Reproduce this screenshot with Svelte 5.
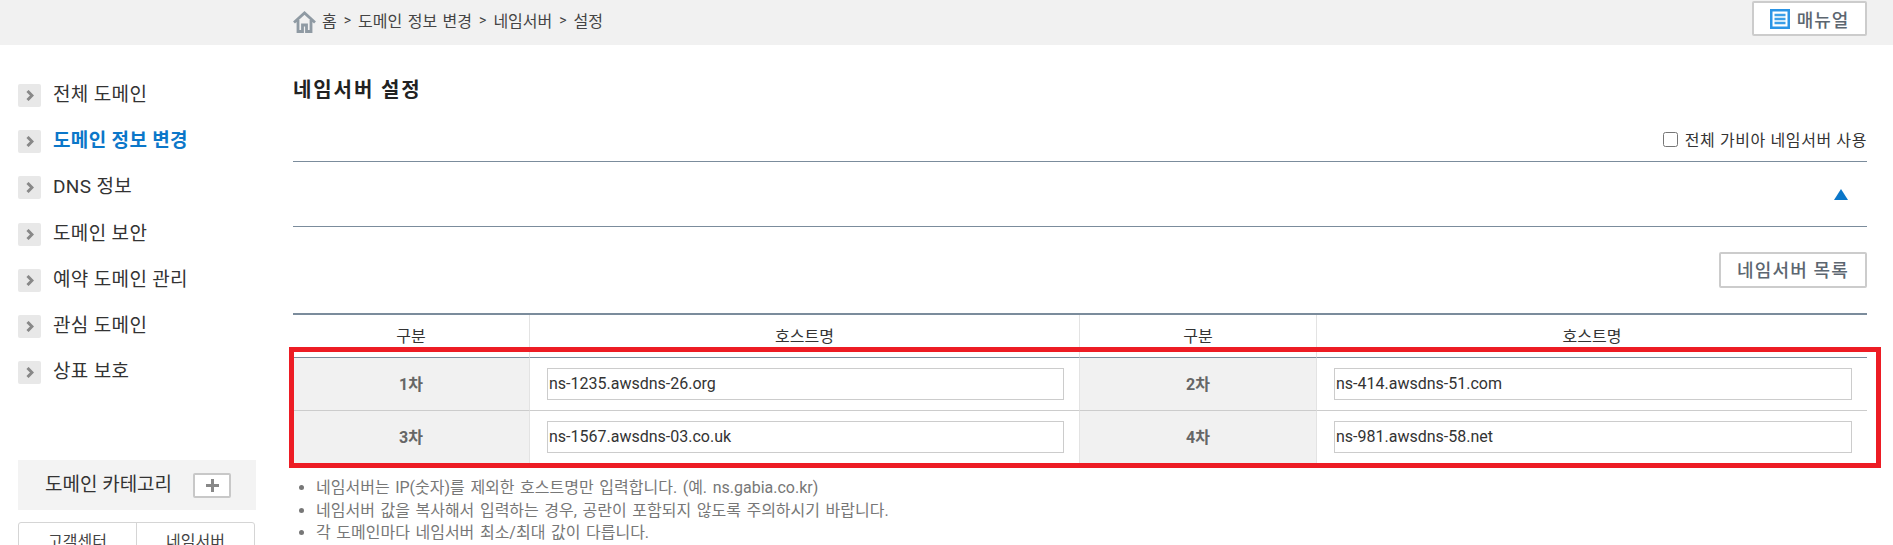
<script>
  const crumbs = ["도메인 정보 변경", "네임서버", "설정"];
  const navItems = [
    { label: "전체 도메인" },
    { label: "도메인 정보 변경", active: true },
    { label: "DNS 정보" },
    { label: "도메인 보안" },
    { label: "예약 도메인 관리" },
    { label: "관심 도메인" },
    { label: "상표 보호" }
  ];
  const rows = [
    [
      { name: "1차", host: "ns-1235.awsdns-26.org" },
      { name: "2차", host: "ns-414.awsdns-51.com" }
    ],
    [
      { name: "3차", host: "ns-1567.awsdns-03.co.uk" },
      { name: "4차", host: "ns-981.awsdns-58.net" }
    ]
  ];
  const notes = [
    "네임서버는 IP(숫자)를 제외한 호스트명만 입력합니다. (예. ns.gabia.co.kr)",
    "네임서버 값을 복사해서 입력하는 경우, 공란이 포함되지 않도록 주의하시기 바랍니다.",
    "각 도메인마다 네임서버 최소/최대 값이 다릅니다."
  ];
</script>

<div class="page">
  <header class="topbar">
    <div class="crumbs">
      <svg class="home" width="23" height="22" viewBox="0 0 23 22" aria-hidden="true">
        <path d="M1 11.500 11.500 2 22 11.500M5 9v11.500h4.500v-6.500h4v6.500H18V9" fill="none" stroke="#8f9aa3" stroke-width="2.800" />
      </svg>
      <span>홈</span>
      {#each crumbs as c}
        <span class="sep">&gt;</span>
        <span>{c}</span>
      {/each}
    </div>
    <button class="manual">
      <svg width="20" height="20" viewBox="0 0 20 20" aria-hidden="true">
        <rect width="20" height="20" fill="#2b95e6" />
        <rect x="2.500" y="2.500" width="15" height="15" fill="#fff" />
        <path d="M4.500 6h11M4.500 10h11M4.500 14h11" stroke="#3b9fe8" stroke-width="2.500" />
      </svg>
      <span>매뉴얼</span>
    </button>
  </header>

  <div class="body">
    <aside class="side">
      <ul class="nav">
        {#each navItems as item}
          <li class:active={item.active}>
            <span class="arrow">
              <svg width="8" height="11" viewBox="0 0 8 11" aria-hidden="true">
                <path d="M1.500 1 6 5.500 1.500 10" fill="none" stroke="#888" stroke-width="3" />
              </svg>
            </span>
            <span class="label">{item.label}</span>
          </li>
        {/each}
      </ul>
      <div class="category">
        <span class="label">도메인 카테고리</span>
        <button class="plus" aria-label="추가">
          <svg width="13" height="13" viewBox="0 0 13 13" aria-hidden="true">
            <path d="M6.500 0v13M0 6.500h13" stroke="#888" stroke-width="3" />
          </svg>
        </button>
      </div>
      <div class="support">
        <div>고객센터</div>
        <div>네임서버</div>
      </div>
    </aside>

    <main class="main">
      <h1>네임서버 설정</h1>
      <label class="use-all">
        <input type="checkbox" />
        <span>전체 가비아 네임서버 사용</span>
      </label>
      <div class="fold">
        <span class="triangle"></span>
      </div>
      <div class="actions">
        <button class="list-btn">네임서버 목록</button>
      </div>

      <div class="table-wrap">
        <table>
          <colgroup>
            <col class="c1" />
            <col class="c2" />
            <col class="c3" />
            <col />
          </colgroup>
          <thead>
            <tr>
              <th>구분</th>
              <th>호스트명</th>
              <th>구분</th>
              <th>호스트명</th>
            </tr>
          </thead>
          <tbody>
            {#each rows as row}
              <tr>
                {#each row as ns}
                  <th class="name">{ns.name}</th>
                  <td><input type="text" value={ns.host} /></td>
                {/each}
              </tr>
            {/each}
          </tbody>
        </table>
        <div class="highlight"></div>
      </div>

      <ul class="notes">
        {#each notes as note}
          <li>{note}</li>
        {/each}
      </ul>
    </main>
  </div>
</div>

<style>
  :global(body) {
    margin: 0;
    background: #fff;
  }

  .page {
    height: 545px;
    overflow: hidden;
    font-family: Roboto, "Noto Sans CJK KR", sans-serif;
    color: #222;
  }

  button {
    font-family: inherit;
    background: #fff;
    cursor: pointer;
  }

  .topbar {
    height: 45px;
    box-sizing: border-box;
    background: #f1f1f1;
    padding: 1px 26px 0 293px;
    display: flex;
    justify-content: space-between;
    align-items: flex-start;
  }

  .crumbs {
    display: flex;
    align-items: center;
    gap: 7px;
    height: 37px;
    font-size: 16px;
    word-spacing: 1.500px;
    color: #444;
  }

  .home {
    margin-top: 4px;
    margin-right: -1px;
  }

  .sep {
    font-size: 14px;
  }

  .manual {
    width: 115px;
    height: 35px;
    border: 2px solid #ccc;
    border-radius: 2px;
    display: flex;
    align-items: center;
    justify-content: center;
    gap: 7px;
    padding: 0;
    font-size: 18px;
    letter-spacing: 1px;
    font-weight: 500;
    color: #5c6670;
  }

  .body {
    display: flex;
  }

  .side {
    width: 293px;
    flex: none;
    padding: 27px 0 0 18px;
    box-sizing: border-box;
  }

  .nav {
    list-style: none;
    margin: 0;
    padding: 0;
  }

  .nav li {
    height: 46.300px;
    display: flex;
    align-items: center;
    gap: 12px;
    font-size: 19px;
    letter-spacing: 0.350px;
    color: #333;
  }

  .nav li.active {
    color: #0b77c9;
    font-weight: 700;
  }

  .label {
    margin-bottom: 6px;
  }

  .arrow {
    width: 23px;
    height: 23px;
    background: #e8e8e8;
    border-radius: 2px;
    display: flex;
    align-items: center;
    justify-content: center;
    flex: none;
  }

  .category {
    margin-top: 64px;
    width: 238px;
    height: 50px;
    background: #f3f3f3;
    display: flex;
    align-items: center;
    box-sizing: border-box;
    padding-left: 27px;
    gap: 21px;
    font-size: 19px;
    color: #333;
  }

  .plus {
    width: 38px;
    height: 25px;
    border: 2px solid #c8c8c8;
    border-radius: 2px;
    padding: 0;
    display: flex;
    align-items: center;
    justify-content: center;
  }

  .support {
    margin-top: 12px;
    width: 237px;
    height: 60px;
    box-sizing: border-box;
    border: 1px solid #d5d5d5;
    border-radius: 3px;
    display: flex;
    font-size: 16px;
    color: #444;
  }

  .support div {
    flex: 1;
    text-align: center;
    padding-top: 5px;
  }

  .support div + div {
    border-left: 1px solid #d5d5d5;
  }

  .main {
    width: 1574px;
    flex: none;
  }

  h1 {
    margin: 33px 0 0;
    font-size: 20px;
    letter-spacing: 1.900px;
    line-height: 24px;
    font-weight: 700;
    color: #222;
  }

  .use-all {
    display: flex;
    justify-content: flex-end;
    align-items: center;
    gap: 7px;
    margin-top: 26px;
    height: 22px;
    font-size: 16px;
    letter-spacing: 0.600px;
    color: #333;
  }

  .use-all input {
    width: 15px;
    height: 15px;
    margin: 0;
  }

  .fold {
    margin-top: 11px;
    height: 64px;
    border-top: 1px solid #7b8c9c;
    border-bottom: 1px solid #7b8c9c;
    display: flex;
    justify-content: flex-end;
    align-items: center;
    padding-right: 19px;
  }

  .triangle {
    width: 0;
    height: 0;
    border-left: 7px solid transparent;
    border-right: 7px solid transparent;
    border-bottom: 11px solid #0b77c9;
  }

  .actions {
    display: flex;
    justify-content: flex-end;
    margin-top: 25px;
  }

  .list-btn {
    width: 148px;
    height: 36px;
    border: 2px solid #ccc;
    border-radius: 2px;
    padding: 0 0 3px;
    font-size: 18px;
    letter-spacing: 1.200px;
    font-weight: 500;
    color: #5c6670;
  }

  .table-wrap {
    position: relative;
    margin-top: 25px;
  }

  table {
    width: 100%;
    border-collapse: separate;
    border-spacing: 0;
    table-layout: fixed;
    border-top: 2px solid #7b8c9c;
  }

  .c1 { width: 236px; }
  .c2 { width: 550px; }
  .c3 { width: 237px; }

  thead th {
    height: 43px;
    padding: 0 0 2px;
    box-sizing: border-box;
    font-size: 16px;
    font-weight: 400;
    color: #333;
    border-bottom: 1px solid #7b8c9c;
    border-left: 1px solid #e3e3e3;
  }

  thead th:first-child {
    border-left: 0;
  }

  tbody th.name {
    padding: 0 0 2px;
    background: #f1f1f1;
    font-size: 16px;
    font-weight: 700;
    color: #666;
    border-left: 1px solid #e3e3e3;
  }

  tbody tr th.name:first-child {
    border-left: 0;
  }

  tbody td {
    height: 52px;
    padding: 0 15px 0 17px;
    border-left: 1px solid #e3e3e3;
  }

  tbody tr:first-child th,
  tbody tr:first-child td {
    border-bottom: 1px solid #ccc;
  }

  td input {
    display: block;
    width: 100%;
    height: 32px;
    box-sizing: border-box;
    border: 1px solid #ccc;
    padding: 0 1px 2px;
    margin: 0;
    font-family: Roboto, sans-serif;
    font-size: 16px;
    color: #333;
    outline: none;
  }

  .highlight {
    position: absolute;
    left: -4px;
    top: 34px;
    width: 1592px;
    height: 121px;
    box-sizing: border-box;
    border: 5px solid #ed1c24;
    pointer-events: none;
  }

  .notes {
    margin: 14px 0 0;
    padding: 0 0 0 23px;
    font-size: 16px;
    word-spacing: 1.600px;
    line-height: 22.500px;
    color: #777;
  }
</style>
